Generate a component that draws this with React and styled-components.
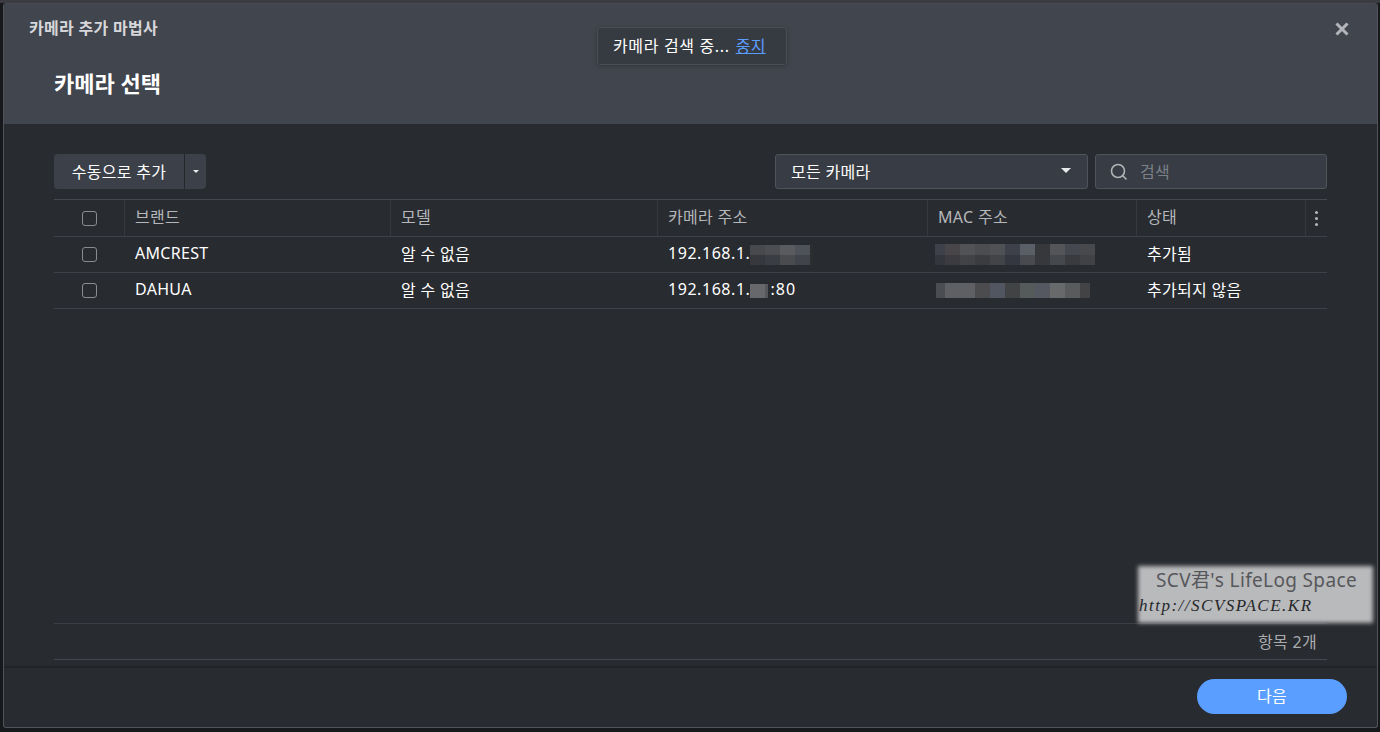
import React from "react";
import styled, { createGlobalStyle } from "styled-components";

const GlobalStyle = createGlobalStyle`
  html, body {
    margin: 0;
    height: 100%;
    background: #17181b;
    overflow: hidden;
  }
  body {
    font-family: "Noto Sans", "Noto Sans CJK KR", sans-serif;
    font-size: 16px;
    letter-spacing: 0.3px;
    color: #fff;
  }
  * { box-sizing: border-box; }
`;

const Page = styled.div`
  height: 732px;
  padding: 3px 2px 4px 3px;
  background: linear-gradient(#3a3c42 0, #3a3c42 3px, #17181b 3px);
`;

const Dialog = styled.div`
  position: relative;
  height: 100%;
  display: flex;
  flex-direction: column;
  border: 1px solid #50535a;
  border-top-color: #474a50;
  border-radius: 3px;
  background: #282b2f;
  overflow: hidden;
`;

const Header = styled.header`
  height: 120px;
  flex: none;
  padding: 13px 25px 0;
  background: #41454d;
`;

const WizardTitle = styled.div`
  font-size: 16px;
  line-height: 22px;
  font-weight: 700;
  color: #d6d7da;
`;

const StepTitle = styled.h1`
  margin: 29px 0 0 25px;
  font-size: 22px;
  line-height: 30px;
  font-weight: 700;
  letter-spacing: 0;
  color: #fff;
`;

const CloseButton = styled.button`
  position: absolute;
  top: 17px;
  right: 27px;
  width: 16px;
  height: 16px;
  padding: 0;
  border: 0;
  background: none;
  color: #b4b6bb;
  display: flex;
`;

const Toast = styled.div`
  position: absolute;
  top: 23px;
  left: 593px;
  width: 190px;
  height: 38px;
  padding: 0 15px 3px;
  display: flex;
  align-items: center;
  white-space: pre;
  letter-spacing: 0.65px;
  color: #fff;
  background: #363a41;
  border: 1px solid #4a4e55;
  border-radius: 3px;
  box-shadow: 0 1px 4px rgba(0, 0, 0, 0.25);
`;

const StopLink = styled.a`
  margin-left: 6px;
  letter-spacing: 0.3px;
  color: #5b9dff;
  text-decoration: underline;
`;

const Body = styled.main`
  flex: 1;
  min-height: 0;
  display: flex;
  flex-direction: column;
  padding: 30px 50px 6px;
`;

const Toolbar = styled.div`
  height: 35px;
  flex: none;
  display: flex;
  align-items: stretch;
`;

const SplitButton = styled.div`
  display: flex;
  border-radius: 4px;
  overflow: hidden;
  background: #3c4149;
`;

const MainAction = styled.div`
  width: 130px;
  padding-bottom: 2px;
  display: flex;
  align-items: center;
  justify-content: center;
  color: #fff;
`;

const CaretAction = styled.div`
  width: 22px;
  display: flex;
  align-items: center;
  justify-content: center;
  border-left: 1px solid #25272b;
`;

const Caret = styled.span`
  width: 0;
  height: 0;
  border-left: ${({ $size }) => $size}px solid transparent;
  border-right: ${({ $size }) => $size}px solid transparent;
  border-top: ${({ $size }) => $size}px solid #e8e9ea;
`;

const SelectBox = styled.div`
  width: 313px;
  margin-left: auto;
  padding: 0 16px 2px 15px;
  display: flex;
  align-items: center;
  justify-content: space-between;
  background: #383c44;
  border: 1px solid #4f535a;
  border-radius: 3px;
`;

const SearchBox = styled.div`
  width: 232px;
  margin-left: 7px;
  padding: 0 14px 2px;
  display: flex;
  align-items: center;
  gap: 12px;
  color: #7c8087;
  background: #383c44;
  border: 1px solid #4f535a;
  border-radius: 3px;
`;

const SearchIcon = styled.svg`
  width: 18px;
  height: 18px;
  flex: none;
  margin-top: 2px;
  color: #b1b3b7;
`;

const Table = styled.div`
  margin-top: 10px;
  border-top: 1px solid #45484e;
`;

const columns = "71px 266px 267px 270px 209px 169px 21px";

const HeaderRow = styled.div`
  height: 37px;
  display: grid;
  grid-template-columns: ${columns};
  border-bottom: 1px solid #3e4147;
`;

const Row = styled.div`
  height: 36px;
  display: grid;
  grid-template-columns: ${columns};
  border-bottom: 1px solid #3e4147;
`;

const HeadCell = styled.div`
  display: flex;
  align-items: center;
  padding: 0 10px 4px;
  color: #b5b7ba;
  border-right: 1px solid #37393f;
  ${({ $center }) => $center && "justify-content: center; padding: 0;"}
  ${({ $last }) => $last && "border-right: 0;"}
`;

const Cell = styled.div`
  display: flex;
  align-items: center;
  padding: 0 10px 3px;
  color: #fff;
  white-space: nowrap;
  ${({ $center }) => $center && "justify-content: center; padding: 0;"}
`;

const Address = styled.span`
  letter-spacing: 0.55px;
`;

const Port = styled.span`
  margin-left: 2px;
  letter-spacing: 1px;
`;

const Checkbox = styled.span`
  width: 15px;
  height: 15px;
  border: 1px solid #8a8c90;
  border-radius: 3px;
`;

const Dots = styled.div`
  display: flex;
  flex-direction: column;
  gap: 3px;
`;

const Dot = styled.span`
  width: 3px;
  height: 3px;
  background: #b5b7ba;
  border-radius: 50%;
`;

const Mosaic = styled.span`
  display: inline-grid;
  grid-template-columns: ${({ $cols }) => $cols};
  grid-auto-rows: ${({ $h }) => $h}px;
  margin-left: ${({ $shift }) => $shift || 0}px;
  margin-top: 3px;
`;

const MosaicCell = styled.span`
  background: ${({ $c }) => $c};
`;

const Spacer = styled.div`
  flex: 1;
`;

const Summary = styled.div`
  height: 37px;
  flex: none;
  display: flex;
  align-items: center;
  justify-content: flex-end;
  padding: 0 10px 2px 0;
  color: #a9abae;
  border-top: 1px solid #3b3e44;
  border-bottom: 1px solid #45484e;
`;

const Footer = styled.footer`
  height: 61px;
  flex: none;
  display: flex;
  align-items: flex-start;
  justify-content: flex-end;
  padding: 11px 30px 0 0;
  border-top: 2px solid #212327;
`;

const NextButton = styled.div`
  width: 150px;
  height: 35px;
  padding-bottom: 3px;
  display: flex;
  align-items: center;
  justify-content: center;
  color: #fff;
  background: #5a9eff;
  border-radius: 18px;
`;

const Watermark = styled.div`
  position: absolute;
  left: 1134px;
  top: 562px;
  width: 235px;
  height: 57px;
  color: #57585b;

  &::before {
    content: "";
    position: absolute;
    inset: 0;
    background: #b9babc;
    filter: blur(2px);
  }
`;

const WatermarkTitle = styled.div`
  position: relative;
  padding: 2px 0 0 18px;
  font-family: "Noto Sans", "Noto Sans CJK KR", sans-serif;
  font-size: 19px;
  line-height: 24px;
  letter-spacing: 0.35px;
  white-space: nowrap;
`;

const WatermarkUrl = styled.div`
  position: relative;
  padding: 5px 0 0 1px;
  font-family: "Liberation Serif", serif;
  font-style: italic;
  font-size: 17px;
  line-height: 18px;
  letter-spacing: 1.5px;
  color: #26272a;
  white-space: nowrap;
`;

const blurA = {
  cols: "repeat(4, 15px) 3px",
  h: 10,
  colors: [
    "#47494d", "#4d4e52", "#5a5b5f", "#4e5259", "#2c2e32",
    "#36383e", "#3a3d43", "#4a4b4f", "#41444b", "#2b2d31",
  ],
};
const blurB = {
  cols: "15px 3px",
  h: 14,
  colors: ["#66686b", "#55575a"],
};
const macA = {
  cols: "10px repeat(10, 15px)",
  h: 10.5,
  colors: [
    "#3e4149", "#484648", "#525356", "#4c4d50", "#505154", "#3e414a", "#5a5e66", "#37383c", "#545558", "#464850", "#48494c",
    "#34363d", "#3c3c40", "#414347", "#3b3c40", "#434447", "#343740", "#484a50", "#37383c", "#45484c", "#3a3b3f", "#414245",
  ],
};
const macB = {
  cols: "9px 30px repeat(7, 15px) 10px",
  h: 15,
  colors: ["#4a4d51", "#5f6063", "#4c4c4e", "#525661", "#424345", "#555a5a", "#555860", "#68696b", "#5a5b5d", "#434346"],
};

const Blur = ({ data, shift }) => (
  <Mosaic $cols={data.cols} $h={data.h} $shift={shift}>
    {data.colors.map((c, i) => (
      <MosaicCell key={i} $c={c} />
    ))}
  </Mosaic>
);

const App = () => (
  <>
    <GlobalStyle />
    <Page>
      <Dialog>
        <Header>
          <WizardTitle>카메라 추가 마법사</WizardTitle>
          <StepTitle>카메라 선택</StepTitle>
        </Header>
        <CloseButton aria-label="닫기">
          <svg viewBox="0 0 16 16" width="16" height="16">
            <path d="M2.5 2.5 13.5 13.5M13.5 2.5 2.5 13.5" stroke="currentColor" strokeWidth="3" fill="none" />
          </svg>
        </CloseButton>
        <Toast>
          카메라 검색 중...
          <StopLink>중지</StopLink>
        </Toast>

        <Body>
          <Toolbar>
            <SplitButton>
              <MainAction>수동으로 추가</MainAction>
              <CaretAction>
                <Caret $size={3.5} />
              </CaretAction>
            </SplitButton>
            <SelectBox>
              모든 카메라
              <Caret $size={5} />
            </SelectBox>
            <SearchBox>
              <SearchIcon viewBox="0 0 18 18" fill="none" stroke="currentColor" strokeWidth="1.6">
                <circle cx="8" cy="8" r="6.5" />
                <path d="M12.5 12.5 16.5 16.5" />
              </SearchIcon>
              검색
            </SearchBox>
          </Toolbar>

          <Table>
            <HeaderRow>
              <HeadCell $center><Checkbox /></HeadCell>
              <HeadCell>브랜드</HeadCell>
              <HeadCell>모델</HeadCell>
              <HeadCell>카메라 주소</HeadCell>
              <HeadCell>MAC 주소</HeadCell>
              <HeadCell>상태</HeadCell>
              <HeadCell $center $last>
                <Dots><Dot /><Dot /><Dot /></Dots>
              </HeadCell>
            </HeaderRow>
            <Row>
              <Cell $center><Checkbox /></Cell>
              <Cell>AMCREST</Cell>
              <Cell>알 수 없음</Cell>
              <Cell><Address>192.168.1.</Address><Blur data={blurA} /></Cell>
              <Cell><Blur data={macA} shift={-3} /></Cell>
              <Cell>추가됨</Cell>
              <Cell />
            </Row>
            <Row>
              <Cell $center><Checkbox /></Cell>
              <Cell>DAHUA</Cell>
              <Cell>알 수 없음</Cell>
              <Cell><Address>192.168.1.</Address><Blur data={blurB} /><Port>:80</Port></Cell>
              <Cell><Blur data={macB} shift={-2} /></Cell>
              <Cell>추가되지 않음</Cell>
              <Cell />
            </Row>
          </Table>

          <Spacer />
          <Summary>항목 2개</Summary>
        </Body>

        <Footer>
          <NextButton>다음</NextButton>
        </Footer>

        <Watermark>
          <WatermarkTitle>SCV君's LifeLog Space</WatermarkTitle>
          <WatermarkUrl>http://SCVSPACE.KR</WatermarkUrl>
        </Watermark>
      </Dialog>
    </Page>
  </>
);

export default App;
